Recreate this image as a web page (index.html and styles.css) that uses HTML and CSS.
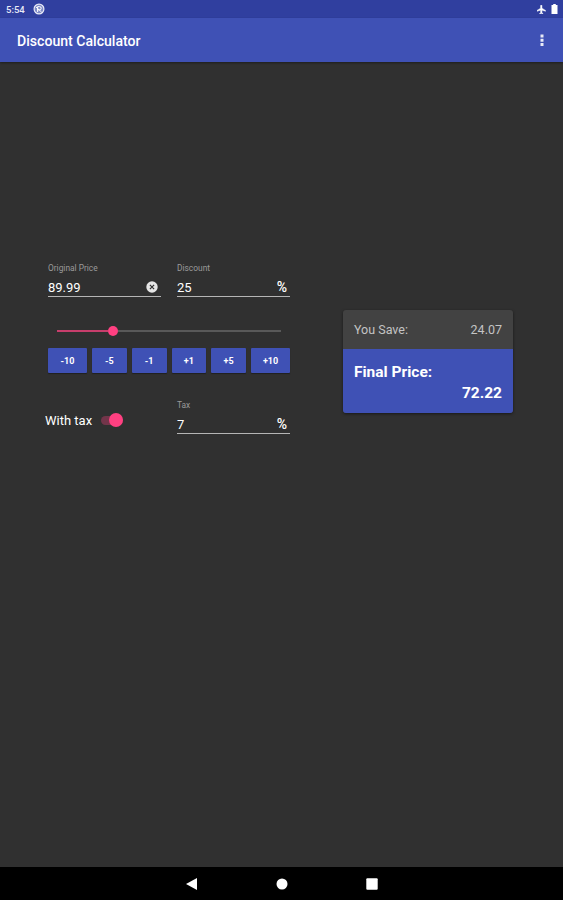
FILE: index.html
```html
<!DOCTYPE html>
<html lang="en">
<head>
  <meta charset="UTF-8">
  <meta name="viewport" content="width=device-width, initial-scale=1.0">
  <title>Discount Calculator</title>
  <link rel="stylesheet" href="styles.css">
</head>
<body>
  <div class="status-bar">
    <span class="clock">5:54</span>
    <svg class="status-app" viewBox="0 0 12 12" width="12" height="12">
      <circle cx="6" cy="6" r="4.9" fill="#7f8bc8" stroke="#e8eaf6" stroke-width="1.2"/>
      <path d="M4.6 9V3.6h2a1.6 1.6 0 0 1 0 3.200h-2M3 4l5.500 5" fill="none" stroke="#fff" stroke-width="1"/>
    </svg>
    <svg class="plane" viewBox="2 2 20 20" width="9" height="9">
      <path d="M21 16v-2l-8-5V3.500a1.500 1.500 0 0 0-3 0V9l-8 5v2l8-2.500V19l-2 1.500V22l3.500-1 3.500 1v-1.500L13 19v-5.500z" fill="#fff" stroke="#fff" stroke-width="1"/>
    </svg>
    <svg class="battery" viewBox="0 0 7 10" width="7" height="10">
      <path d="M2.200 0h2.600v1H6.500v9h-6V1h1.700z" fill="#fff"/>
    </svg>
  </div>

  <header class="app-bar">
    <h1>Discount Calculator</h1>
    <svg class="menu" viewBox="0 0 4 12" width="4" height="12">
      <path d="M.5.5h3v3h-3zM.5 4.700h3v3h-3zM.5 8.900h3v3h-3z" fill="#e8eaf6"/>
    </svg>
  </header>

  <main>
    <section class="form">
      <div class="row">
        <div class="field">
          <div class="label">Original Price</div>
          <div class="value">
            <span>89.99</span>
            <svg class="clear" viewBox="0 0 12 12" width="12" height="12">
              <circle cx="6" cy="6" r="5.700" fill="#e6e6e6"/>
              <path d="M3.900 3.900l4.200 4.200M8.100 3.900L3.900 8.100" stroke="#303030" stroke-width="1.200"/>
            </svg>
          </div>
        </div>
        <div class="field">
          <div class="label">Discount</div>
          <div class="value"><span>25</span><span class="percent">%</span></div>
        </div>
      </div>

      <div class="slider">
        <div class="slider-fill"></div>
        <div class="slider-thumb"></div>
        <div class="slider-rest"></div>
      </div>

      <div class="buttons">
        <button class="wide">-10</button>
        <button>-5</button>
        <button>-1</button>
        <button>+1</button>
        <button>+5</button>
        <button class="wide">+10</button>
      </div>

      <div class="row tax-row">
        <div class="tax-toggle">
          <span>With tax</span>
          <div class="switch"><div class="switch-thumb"></div></div>
        </div>
        <div class="field">
          <div class="label">Tax</div>
          <div class="value"><span>7</span><span class="percent">%</span></div>
        </div>
      </div>
    </section>

    <section class="card">
      <div class="save">
        <span>You Save:</span>
        <span>24.07</span>
      </div>
      <div class="final">
        <div>Final Price:</div>
        <div class="price">72.22</div>
      </div>
    </section>
  </main>

  <nav class="nav-bar">
    <svg viewBox="0 0 12 14" width="12" height="14"><path d="M0 7L11 1v12z" fill="#fff"/></svg>
    <svg viewBox="0 0 12 12" width="12" height="12"><circle cx="6" cy="6" r="5.500" fill="#fff"/></svg>
    <svg viewBox="0 0 12 12" width="12" height="12"><rect x=".3" y=".3" width="11.400" height="11.400" rx="1" fill="#fff"/></svg>
  </nav>
</body>
</html>
```

FILE: styles.css
```css
* {
  box-sizing: border-box;
}

body {
  margin: 0;
  height: 100vh;
  display: flex;
  flex-direction: column;
  overflow: hidden;
  background: #303030;
  color: #fff;
  font-family: Roboto, sans-serif;
}

svg {
  display: block;
  flex: none;
}

/* Top bars */
.status-bar {
  display: flex;
  align-items: center;
  height: 18px;
  padding: 0 5px 0 6px;
  background: #303f9f;
}

.clock {
  width: 27px;
  font-size: 9.5px;
  font-weight: 500;
  color: #e8eaf6;
}

.plane {
  margin-left: auto;
  margin-right: 5px;
}

.app-bar {
  display: flex;
  align-items: center;
  justify-content: space-between;
  height: 44px;
  padding: 2px 19px 0 17px;
  background: #3f51b5;
  box-shadow: 0 1px 2px rgba(0, 0, 0, 0.4);
}

h1 {
  margin: 0;
  font-size: 14.1px;
  font-weight: 500;
  line-height: 20px;
}

.menu {
  margin-top: -2px;
}

/* Calculator */
main {
  flex: 1;
  display: flex;
  align-items: flex-start;
  gap: 53px;
  padding: 200px 0 0 48px;
}

.form {
  width: 242px;
}

.row {
  display: flex;
  justify-content: space-between;
}

.field {
  width: 113px;
}

.label {
  height: 12px;
  font-size: 8.4px;
  line-height: 13px;
  color: #9a9a9a;
}

.value {
  display: flex;
  align-items: center;
  justify-content: space-between;
  height: 23px;
  padding: 5px 3px 0 0;
  border-bottom: 1px solid #b5b5b5;
  font-size: 13px;
  line-height: 17px;
}

.clear {
  margin-top: -2px;
}

.percent {
  font-size: 14px;
  font-weight: 500;
}

.slider {
  display: flex;
  align-items: center;
  height: 20px;
  margin: 24px 9px 7px;
}

.slider-fill {
  width: 51px;
  height: 2px;
  background: #c83e6c;
}

.slider-thumb {
  width: 10px;
  height: 10px;
  border-radius: 50%;
  background: #ff4081;
}

.slider-rest {
  flex: 1;
  height: 2px;
  background: #595959;
}

.buttons {
  display: flex;
  gap: 5px;
}

button {
  flex: 1;
  height: 25px;
  padding: 0;
  border: none;
  border-radius: 1px;
  background: #3f51b5;
  box-shadow: 0 1px 1px rgba(0, 0, 0, 0.35);
  color: #fff;
  font-family: inherit;
  font-size: 9px;
  font-weight: 700;
}

button.wide {
  flex: none;
  width: 39px;
}

.tax-row {
  margin-top: 26px;
}

.tax-toggle {
  display: flex;
  align-items: center;
  height: 18px;
  margin: 12px 0 0 -3px;
  font-size: 13px;
}

.switch {
  display: flex;
  align-items: center;
  justify-content: flex-end;
  width: 22px;
  height: 9px;
  margin-left: 9px;
  border-radius: 5px;
  background: #73354a;
}

.switch-thumb {
  flex: none;
  width: 14px;
  height: 14px;
  border-radius: 50%;
  background: #ff4081;
}

/* Result card */
.card {
  width: 170px;
  margin-top: 48px;
  border-radius: 3px;
  overflow: hidden;
  background: #424242;
  box-shadow: 0 1px 3px rgba(0, 0, 0, 0.5);
}

.save {
  display: flex;
  align-items: center;
  justify-content: space-between;
  height: 39px;
  padding: 0 11px;
  font-size: 12.5px;
  color: #c4c4c4;
}

.final {
  height: 64px;
  padding: 13px 11px 0;
  background: #3f51b5;
  font-size: 15.5px;
  font-weight: 700;
  line-height: 21px;
}

.price {
  text-align: right;
}

/* System navigation */
.nav-bar {
  display: flex;
  align-items: center;
  justify-content: center;
  gap: 78px;
  height: 33px;
  background: #000;
}
```
